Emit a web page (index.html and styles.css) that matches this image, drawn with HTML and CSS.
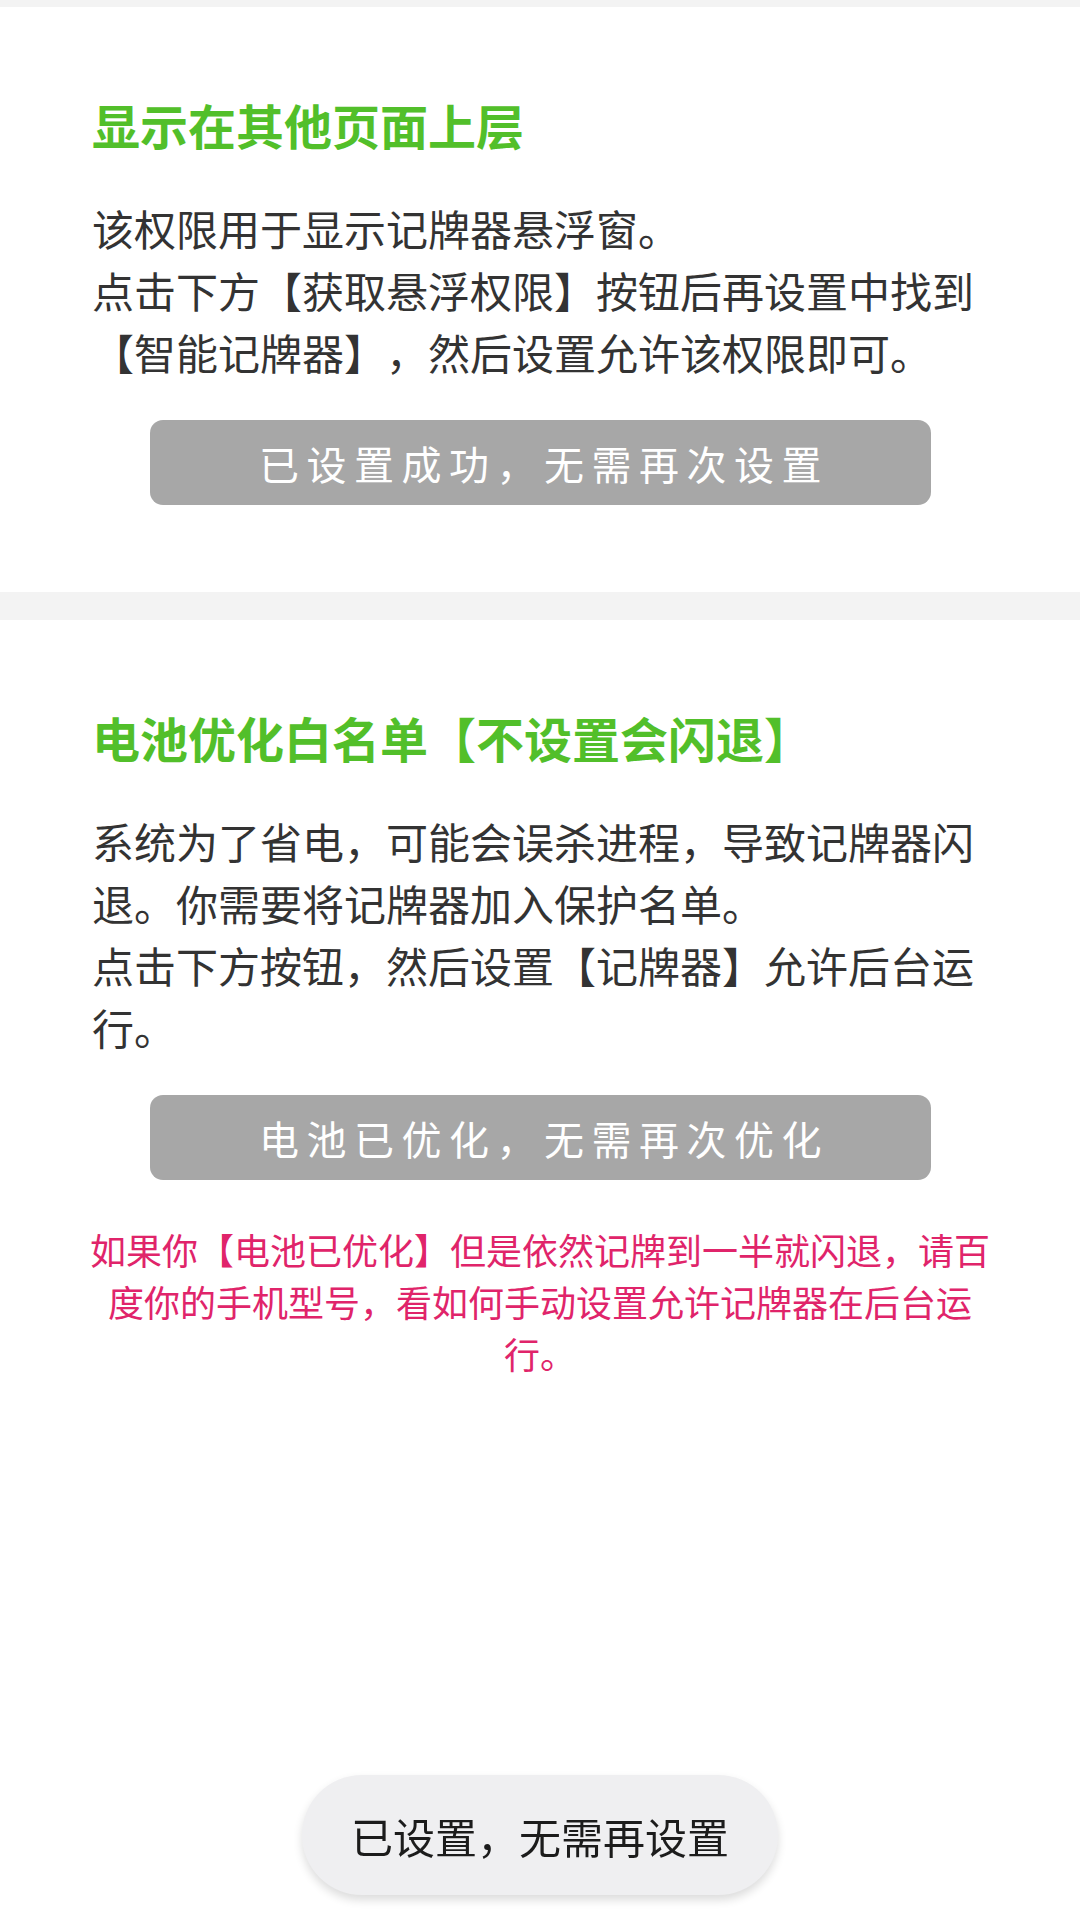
FILE: index.html
```html
<!DOCTYPE html>
<html lang="zh-CN">
<head>
<meta charset="utf-8">
<title>权限设置</title>
<link rel="stylesheet" href="styles.css">
</head>
<body>
<div class="band band-top"></div>
<section class="card">
  <h2 class="title">显示在其他页面上层</h2>
  <p class="desc">该权限用于显示记牌器悬浮窗。<br>点击下方【获取悬浮权限】按钮后再设置中找到【智能记牌器】，然后设置允许该权限即可。</p>
  <div class="btn">已设置成功，无需再次设置</div>
</section>
<div class="band band-mid"></div>
<section class="card card-last">
  <h2 class="title">电池优化白名单【不设置会闪退】</h2>
  <p class="desc">系统为了省电，可能会误杀进程，导致记牌器闪退。你需要将记牌器加入保护名单。<br>点击下方按钮，然后设置【记牌器】允许后台运行。</p>
  <div class="btn">电池已优化，无需再次优化</div>
  <p class="note">如果你【电池已优化】但是依然记牌到一半就闪退，请百度你的手机型号，看如何手动设置允许记牌器在后台运行。</p>
</section>
<div class="toast">已设置，无需再设置</div>
</body>
</html>
```

FILE: styles.css
```css
html, body {
  margin: 0;
  padding: 0;
  background: #ffffff;
}
body {
  width: 1080px;
  min-height: 1920px;
  font-family: "Noto Sans CJK SC", "Noto Sans", sans-serif;
  text-spacing-trim: space-all;
}
.band {
  background: #f3f3f3;
}
.band-top {
  height: 7px;
}
.band-mid {
  height: 28px;
}
.card {
  padding: 86px 92px 87px;
}
.card-last {
  padding-bottom: 40px;
}
.title {
  margin: 0;
  font-size: 48px;
  line-height: 62px;
  font-weight: 700;
  color: #52bf2a;
}
.desc {
  margin: 42px 0 0;
  font-size: 42px;
  line-height: 62px;
  color: #333333;
}
.btn {
  margin: 37px 57px 0 58px;
  height: 85px;
  border-radius: 13px;
  background: #a7a7a7;
  color: #ffffff;
  font-size: 40px;
  letter-spacing: 7.5px;
  padding-left: 7px;
  display: flex;
  align-items: center;
  justify-content: center;
}
.note {
  margin: 43px -12px 0;
  font-size: 36px;
  line-height: 52px;
  color: #e0246a;
  text-align: center;
}
.toast {
  position: fixed;
  left: 50%;
  bottom: 25px;
  transform: translateX(-50%);
  width: 476px;
  height: 120px;
  border-radius: 60px;
  background: #efeff1;
  box-shadow: 0 5px 10px rgba(0, 0, 0, 0.14);
  display: flex;
  align-items: center;
  justify-content: center;
  font-size: 42px;
  color: #1c1c1c;
}
```
